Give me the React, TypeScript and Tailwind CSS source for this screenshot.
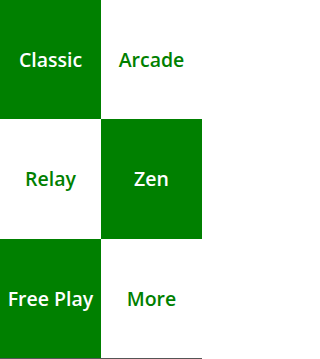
const tiles = [
  { label: "Classic", dark: true },
  { label: "Arcade", dark: false },
  { label: "Relay", dark: false },
  { label: "Zen", dark: true },
  { label: "Free Play", dark: true },
  { label: "More", dark: false },
];

export default function App() {
  return (
    <div className="w-[202px] h-[359px] bg-white flex flex-col font-['Open_Sans',sans-serif]">
      <div className="grid grid-cols-[101px_101px] grid-rows-3 h-[358px]">
        {tiles.map((t) => (
          <div
            key={t.label}
            className={
              t.dark
                ? "flex items-center justify-center bg-[#008000] text-white text-[19.5px] font-semibold"
                : "flex items-center justify-center bg-white text-[#008000] text-[19.5px] font-semibold"
            }
          >
            {t.label}
          </div>
        ))}
      </div>
      <div className="h-px bg-[#555555]" />
    </div>
  );
}
